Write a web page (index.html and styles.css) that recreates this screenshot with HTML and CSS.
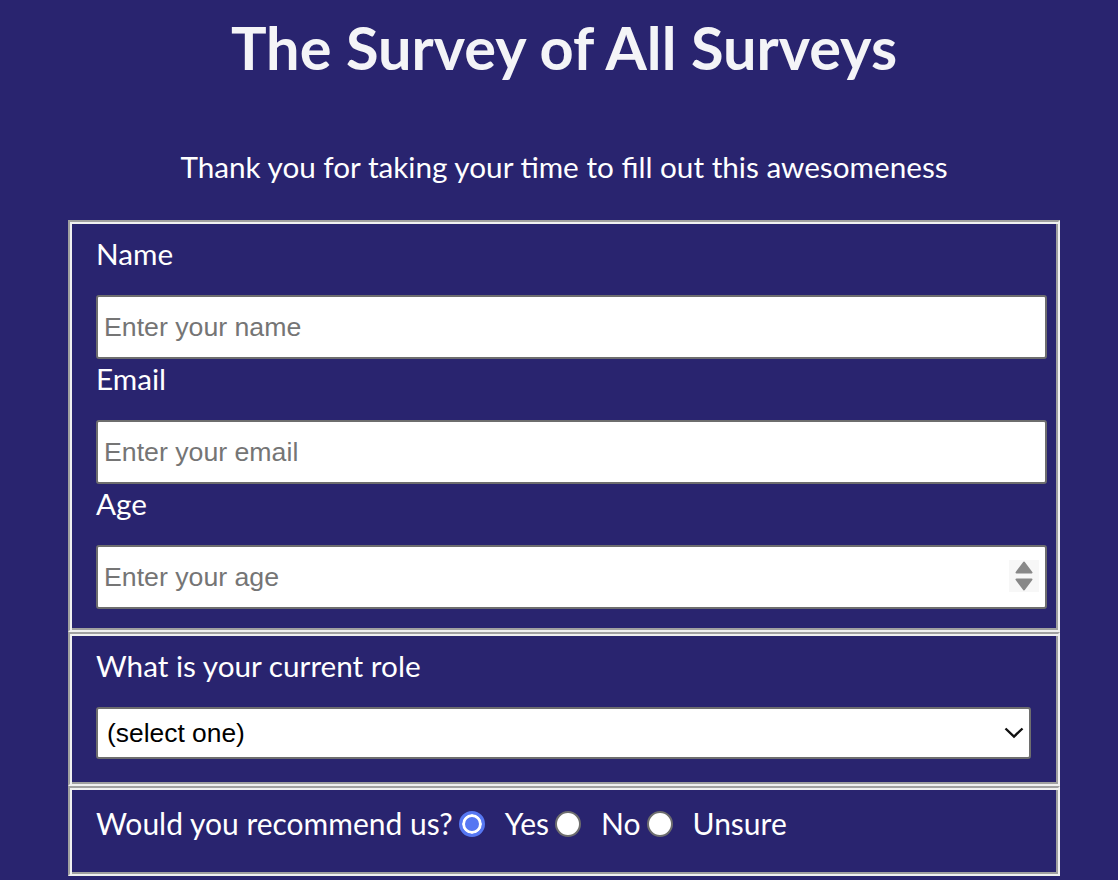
FILE: index.html
```html
<!DOCTYPE html>
<html lang="en">
<head>
<meta charset="utf-8">
<title>The Survey of All Surveys</title>
<link rel="stylesheet" href="styles.css">
</head>
<body>
<main class="page">
  <h1 class="title" id="title">The Survey of All Surveys</h1>
  <p class="description" id="description">Thank you for taking your time to fill out this awesomeness</p>
  <form class="survey-form" id="survey-form">
    <fieldset class="group">
      <label class="field-label" for="name" id="name-label">Name</label>
      <input class="text-input" id="name" type="text" placeholder="Enter your name">
      <label class="field-label" for="email" id="email-label">Email</label>
      <input class="text-input" id="email" type="email" placeholder="Enter your email">
      <label class="field-label" for="number" id="number-label">Age</label>
      <div class="number-wrap">
        <input class="text-input number-input" id="number" type="number" placeholder="Enter your age">
        <svg class="spinner" width="30" height="32" viewBox="0 0 30 32" aria-hidden="true">
          <rect x="0" y="0" width="30" height="32" fill="#f7f7f7"/>
          <path d="M15 2.5 L22.5 12.5 L7.5 12.5 Z" fill="#888" stroke="#888" stroke-width="2" stroke-linejoin="round"/>
          <path d="M7.5 19.5 L22.5 19.5 L15 29.5 Z" fill="#888" stroke="#888" stroke-width="2" stroke-linejoin="round"/>
        </svg>
      </div>
    </fieldset>
    <fieldset class="group group-role">
      <label class="field-label" for="dropdown">What is your current role</label>
      <div class="select-wrap">
        <select class="select-input" id="dropdown">
          <option>(select one)</option>
          <option>Student</option>
          <option>Full time job</option>
          <option>Other</option>
        </select>
        <svg class="chevron" width="20" height="12" viewBox="0 0 20 12" aria-hidden="true">
          <path d="M1.5 1.5 L10 9.5 L18.5 1.5" fill="none" stroke="#111" stroke-width="2.4"/>
        </svg>
      </div>
    </fieldset>
    <fieldset class="group group-last">
      <div class="radio-row">
        <span class="radio-question">Would you recommend us?</span>
        <input class="radio" type="radio" id="rec-yes" name="recommend" value="yes" checked>
        <label class="radio-label" for="rec-yes">Yes</label>
        <input class="radio" type="radio" id="rec-no" name="recommend" value="no">
        <label class="radio-label" for="rec-no">No</label>
        <input class="radio" type="radio" id="rec-unsure" name="recommend" value="unsure">
        <label class="radio-label" for="rec-unsure">Unsure</label>
      </div>
    </fieldset>
  </form>
</main>
</body>
</html>
```

FILE: styles.css
```css
body {
  margin: 8px;
  background: #29246f;
  color: #ffffff;
  font-family: Lato, "Open Sans", sans-serif;
}

.page {
  width: 992px;
  margin-left: 60px;
}

.title {
  margin: 3px 0 0;
  text-align: center;
  font-size: 59.5px;
  line-height: 72px;
  font-weight: 700;
  color: #f4f4f7;
}

.description {
  margin: 66px 0 36px;
  text-align: center;
  font-size: 29.7px;
  line-height: 35px;
}

.survey-form {
  margin: 0;
}

.group {
  margin: 0;
  border: 2px solid;
  border-color: #a0a0a0 #f0f0f0 #f0f0f0 #a0a0a0;
  box-shadow: inset 2px 2px 0 #f0f0f0, inset -2px -2px 0 #a0a0a0;
  padding: 12px 11px 21px 26px;
  min-width: 0;
}

.field-label {
  display: block;
  font-size: 29.7px;
  line-height: 35px;
  margin: 2px 0 24px;
}

.text-input {
  display: block;
  box-sizing: border-box;
  width: 100%;
  height: 64px;
  margin: 0;
  padding: 0 6px;
  border: 2px solid #6e6e6e;
  border-radius: 3px;
  background: #ffffff;
  font-family: "Liberation Sans", Arial, sans-serif;
  font-size: 26.7px;
  color: #000;
}

.text-input::placeholder {
  color: #757575;
}

.number-wrap {
  position: relative;
}

.number-input {
  -moz-appearance: textfield;
  appearance: textfield;
}

.number-input::-webkit-inner-spin-button,
.number-input::-webkit-outer-spin-button {
  -webkit-appearance: none;
  margin: 0;
}

.spinner {
  position: absolute;
  right: 8px;
  top: 15px;
  pointer-events: none;
}

.group-role {
  padding-bottom: 25px;
}

.select-wrap {
  position: relative;
  width: 935px;
}

.select-input {
  display: block;
  box-sizing: border-box;
  width: 100%;
  height: 52px;
  margin: 0;
  padding: 0 9px;
  border: 2px solid #6e6e6e;
  border-radius: 3px;
  background: #ffffff;
  color: #000;
  font-family: "Liberation Sans", Arial, sans-serif;
  font-size: 26.4px;
  -webkit-appearance: none;
  appearance: none;
}

.chevron {
  position: absolute;
  right: 7px;
  top: 20px;
  pointer-events: none;
}

.group-last {
  padding-bottom: 33px;
}

.radio-row {
  display: flex;
  align-items: center;
  margin-top: 6px;
  font-size: 30px;
  line-height: 35px;
}

.radio {
  -webkit-appearance: none;
  appearance: none;
  box-sizing: border-box;
  width: 26px;
  height: 26px;
  margin: 0 20px 0 6px;
  border: 2px solid #6e6e6e;
  border-radius: 50%;
  background: #ffffff;
  flex: none;
}

.radio:checked {
  border: 3px solid #5677f2;
  background: #5677f2;
  box-shadow: inset 0 0 0 3px #ffffff;
}
```
